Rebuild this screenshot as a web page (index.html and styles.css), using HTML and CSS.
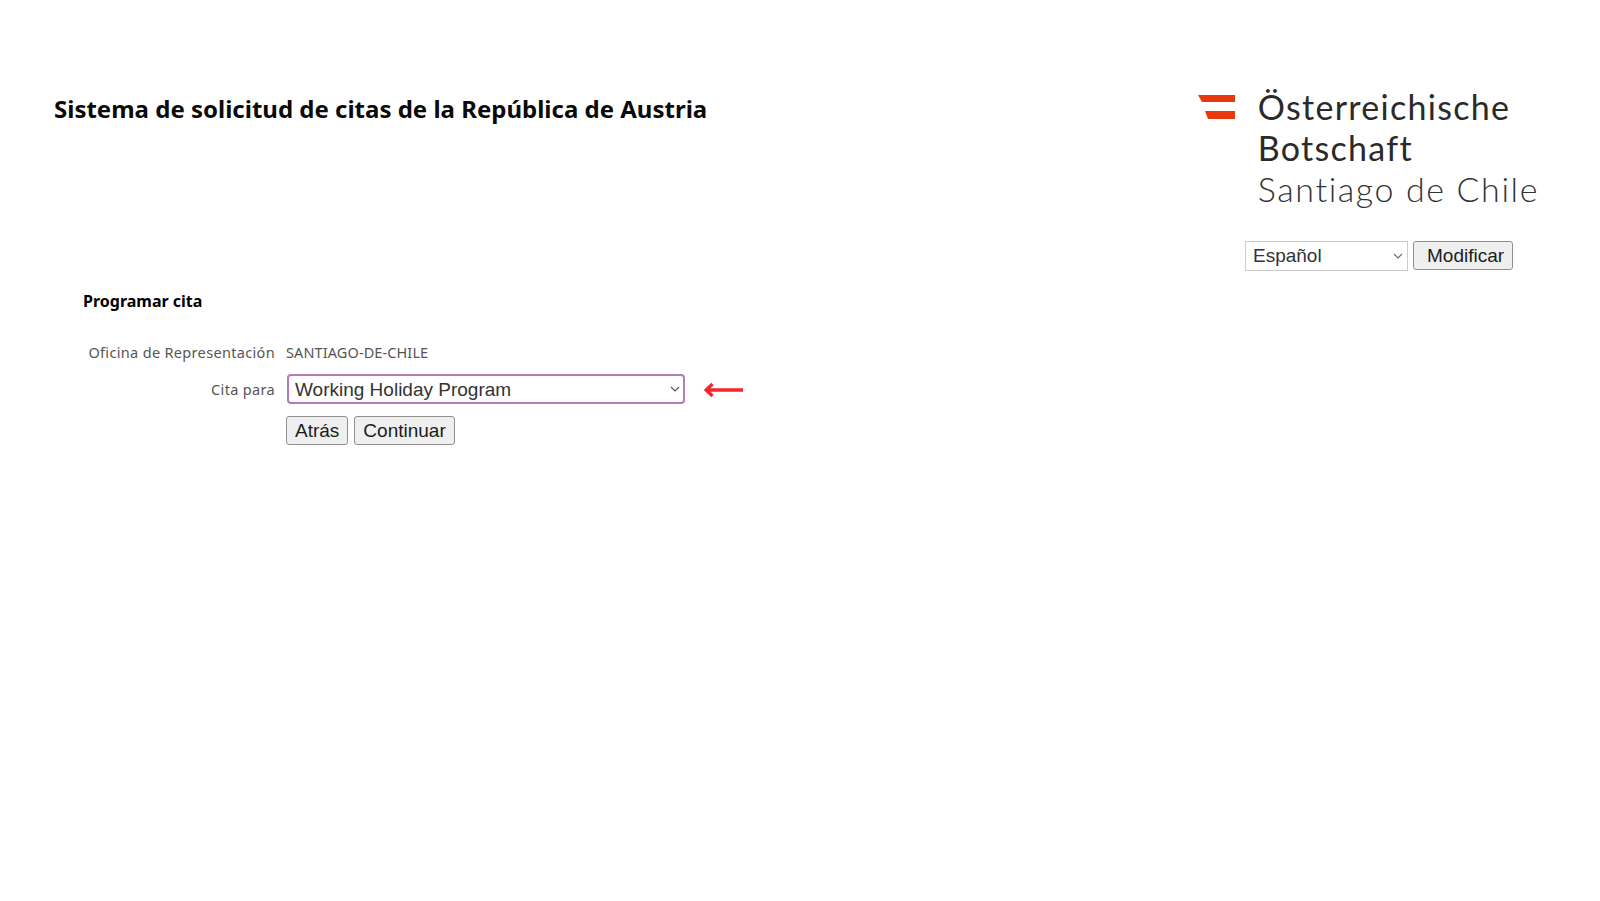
FILE: index.html
```html
<!DOCTYPE html>
<html lang="es">
<head>
<meta charset="utf-8">
<title>Sistema de solicitud de citas de la República de Austria</title>
<link rel="stylesheet" href="styles.css">
</head>
<body>
<header class="header">
  <h1 class="title">Sistema de solicitud de citas de la República de Austria</h1>
  <div class="aside">
    <div class="logo">
      <svg class="flag" width="37" height="24" viewBox="0 0 37 24"><path fill="#e8380d" d="M0 0H37V7H4ZM7 16H37V24H10Z"/></svg>
      <div class="logo-text">
        <div>Österreichische</div>
        <div>Botschaft</div>
        <div class="logo-light">Santiago de Chile</div>
      </div>
    </div>
    <form class="lang">
      <span class="select-wrap">
        <select class="select select-lang"><option>Español</option></select>
        <svg class="chev" width="10" height="6" viewBox="0 0 10 6"><path fill="none" stroke="#666" stroke-width="1.1" d="M1 1l4 4 4-4"/></svg>
      </span>
      <button type="button" class="btn btn-mod">Modificar</button>
    </form>
  </div>
</header>
<main class="main">
  <h2 class="subtitle">Programar cita</h2>
  <div class="form">
    <div class="label">Oficina de Representación</div>
    <div class="value">SANTIAGO-DE-CHILE</div>
    <div class="label">Cita para</div>
    <div class="field">
      <span class="select-wrap">
        <select class="select select-main"><option>Working Holiday Program</option></select>
        <svg class="chev" width="10" height="6" viewBox="0 0 10 6"><path fill="none" stroke="#555" stroke-width="1.2" d="M1 1l4 4 4-4"/></svg>
      </span>
      <svg class="arrow" width="40" height="16" viewBox="0 0 40 16"><path fill="none" stroke="#f5262c" stroke-width="3.4" d="M40 8H3M9.5 2L3.2 8l6.3 6"/></svg>
    </div>
    <div></div>
    <div class="actions">
      <button type="button" class="btn">Atrás</button>
      <button type="button" class="btn">Continuar</button>
    </div>
  </div>
</main>
</body>
</html>
```
FILE: styles.css
```css
* { box-sizing: border-box; }
html, body { margin: 0; background: #fff; }
body { width: 1600px; height: 901px; overflow: hidden; font-family: "Noto Sans", sans-serif; color: #000; }

.header { display: flex; justify-content: space-between; align-items: flex-start; padding: 86px 87px 0 54px; }
.title { margin: 7px 0 0; font-size: 24px; line-height: 32px; font-weight: 700; color: #0a0a0a; }
.aside { display: flex; flex-direction: column; align-items: flex-end; }
.logo { display: flex; align-items: flex-start; gap: 23px; margin-right: -26px; }
.flag { margin-top: 9px; }
.logo-text { font-family: Lato, sans-serif; font-size: 34px; line-height: 41px; letter-spacing: 1.3px; color: #2a2a2a; }
.logo-light { font-weight: 300; letter-spacing: 1.6px; color: #333; }

.lang { display: flex; gap: 5px; margin-top: 32px; }
.select-wrap { position: relative; display: inline-flex; }
.select { appearance: none; -webkit-appearance: none; background: #fff; font-family: "Liberation Sans", Arial, sans-serif; font-size: 19px; color: #333; padding: 0 20px 0 7px; margin: 0; outline: 0; }
.select-lang { width: 163px; height: 30px; border: 1px solid #ccc; padding-bottom: 2px; }
.select-main { width: 398px; height: 30px; border: 2px solid #b57ab8; border-radius: 4px; padding-left: 6px; }
.chev { position: absolute; right: 5px; top: 12px; }
.btn { font-family: "Liberation Sans", Arial, sans-serif; font-size: 19px; color: #1c1c1c; height: 29px; padding: 0 8px; background: #efefef; border: 1px solid #8f8f8f; border-radius: 3px; margin: 0; }
.btn-mod { width: 100px; padding-left: 13px; padding-right: 8px; }

.main { padding: 0 0 0 83px; margin-top: 19px; }
.subtitle { margin: 0; font-size: 16px; line-height: 22px; font-weight: 700; }
.form { display: grid; grid-template-columns: 192px 1fr; column-gap: 11px; row-gap: 11px; margin-top: 29px; font-size: 14.5px; color: #555; align-items: center; }
.label { text-align: right; line-height: 22px; letter-spacing: .33px; }
.value { line-height: 22px; letter-spacing: .1px; }
.field { display: flex; align-items: center; gap: 18px; margin-left: 1px; }
.arrow { flex: none; margin-top: 1px; }
.actions { display: flex; gap: 6px; margin-top: 1px; }
```
